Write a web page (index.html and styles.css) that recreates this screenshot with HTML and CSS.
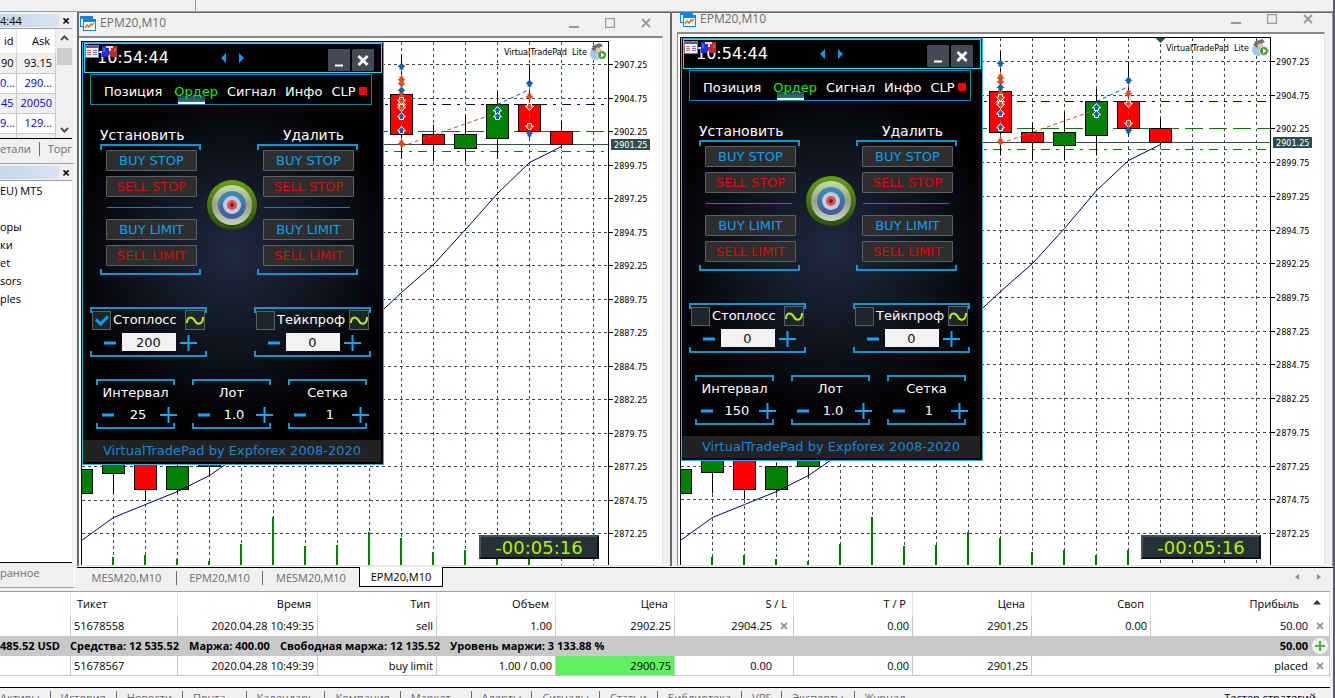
FILE: index.html
```html
<!DOCTYPE html>
<html lang="ru">

<head>
    <meta charset="UTF-8">
    <meta name="viewport" content="width=device-width, initial-scale=1.0">
    <title>EPM20,M10</title>
    <link rel="stylesheet" href="styles.css">
</head>

<body>
    <div class="toolbar"><span class="toolbar-split"></span></div>

    <div class="workspace">
        <aside class="dock">
            <section class="panel market">
                <div class="caption"><span>4:44</span><button type="button" aria-label="Close">×</button></div>
                <div class="market-body">
                    <table class="quotes">
                        <tr><th>id</th><th>Ask</th></tr>
                        <tr class="flat"><td>90</td><td>93.15</td></tr>
                        <tr><td>0...</td><td>290...</td></tr>
                        <tr class="odd"><td>45</td><td>20050</td></tr>
                        <tr><td>9...</td><td>129...</td></tr>
                        <tr class="odd"><td></td><td></td></tr>
                    </table>
                    <div class="scroll">
                        <svg width="9" height="6"><path d="M1 5l3.500-3.500L8 5" /></svg>
                        <span class="thumb"></span>
                        <svg width="9" height="6"><path d="M1 1l3.500 3.500L8 1" /></svg>
                    </div>
                </div>
                <div class="dock-tabs"><span>етали</span><span>Торг</span></div>
            </section>
            <section class="panel navigator">
                <div class="caption"><span></span><button type="button" aria-label="Close">×</button></div>
                <ul class="tree">
                    <li>EU) MT5</li>
                    <li></li>
                    <li>оры</li>
                    <li>ки</li>
                    <li>et</li>
                    <li>sors</li>
                    <li>ples</li>
                </ul>
                <div class="dock-tabs"><span>ранное</span></div>
            </section>
        </aside>

        <main class="mdi">
            <div class="windows">
                <section class="window" id="win1"></section>
                <section class="window second" id="win2"></section>
            </div>
            <nav class="chart-tabs">
                <a href="#win1">MESM20,M10</a>
                <a href="#win1">EPM20,M10</a>
                <a href="#win2">MESM20,M10</a>
                <a href="#win2" class="active">EPM20,M10</a>
                <span class="tab-scroll">
                    <svg width="26" height="8"><path d="M4 1v6L0 4zM22 1v6l4-3z" fill="#8c8c8c" /></svg>
                </span>
            </nav>
        </main>
    </div>

    <section class="terminal">
        <table class="trades">
            <colgroup>
                <col class="c-first"><col class="c-ticket"><col class="c-time">
                <col class="c-num"><col class="c-num"><col class="c-num"><col class="c-num">
                <col class="c-num"><col class="c-num"><col class="c-num"><col>
            </colgroup>
            <thead>
                <tr>
                    <th></th><th class="left">Тикет</th><th>Время</th><th>Тип</th><th>Объем</th><th>Цена</th>
                    <th>S / L</th><th>T / P</th><th>Цена</th><th>Своп</th>
                    <th class="sorted">Прибыль<svg width="8" height="5"><path d="M4 0l4 4.500H0z" fill="#333" /></svg></th>
                </tr>
            </thead>
            <tbody>
                <tr>
                    <td></td><td class="left">51678558</td><td>2020.04.28 10:49:35</td><td>sell</td><td>1.00</td>
                    <td>2902.25</td><td class="closable">2904.25<button type="button" aria-label="Remove S/L"><svg width="8" height="8"><path d="M1 1l6 6M7 1l-6 6" /></svg></button></td>
                    <td>0.00</td><td>2901.25</td><td>0.00</td>
                    <td class="closable">50.00<button type="button" aria-label="Close position"><svg width="8" height="8"><path d="M1 1l6 6M7 1l-6 6" /></svg></button></td>
                </tr>
                <tr class="summary">
                    <td colspan="9" class="left"><span>485.52 USD</span><span>Средства: 12 535.52</span><span>Маржа: 400.00</span><span>Свободная маржа: 12 135.52</span><span>Уровень маржи: 3 133.88 %</span></td>
                    <td></td>
                    <td class="closable">50.00<button type="button" aria-label="New order"><svg width="16" height="16"><circle cx="8" cy="8" r="8" fill="#f2f2f2" /><path d="M8 3v10M3 8h10" class="plus-mark" /></svg></button></td>
                </tr>
                <tr class="last">
                    <td></td><td class="left">51678567</td><td>2020.04.28 10:49:39</td><td>buy limit</td><td>1.00 / 0.00</td>
                    <td class="hit">2900.75</td><td class="closable">0.00</td><td>0.00</td><td>2901.25</td>
                    <td colspan="2" class="closable">placed<button type="button" aria-label="Delete order"><svg width="8" height="8"><path d="M1 1l6 6M7 1l-6 6" /></svg></button></td>
                </tr>
            </tbody>
        </table>
        <nav class="terminal-tabs">
            <a href="#">Активы</a>
            <a href="#">История</a>
            <a href="#">Новости</a>
            <a href="#" class="counted">Почта</a>
            <a href="#">Календарь</a>
            <a href="#">Компания</a>
            <a href="#" class="counted">Маркет</a>
            <a href="#">Алерты</a>
            <a href="#">Сигналы</a>
            <a href="#">Статьи</a>
            <a href="#">Библиотека</a>
            <a href="#">VPS</a>
            <a href="#">Эксперты</a>
            <a href="#">Журнал</a>
            <a href="#" class="tester">Тестер стратегий</a>
        </nav>
    </section>

    <script src="script.js"></script>
</body>

</html>
```

FILE: styles.css
```css
* {
    box-sizing: border-box;
}

body {
    margin: 0;
    height: 100vh;
    display: flex;
    flex-direction: column;
    overflow: hidden;
    background: #f0f0f0;
    border-right: 2px solid #4d5f70;
    font-family: "Open Sans", "Noto Sans", sans-serif;
    font-size: 11px;
    line-height: 14px;
    color: #000;
}

button {
    margin: 0;
    padding: 0;
    border: none;
    background: none;
    font: inherit;
    color: inherit;
    cursor: pointer;
}

a {
    color: inherit;
    text-decoration: none;
}

svg {
    display: block;
}

/* top strip */
.toolbar {
    flex: none;
    height: 12px;
    display: flex;
    border-bottom: 1px solid #9a9a9a;
}

.toolbar-split {
    width: 196px;
    border-right: 1px solid #9a9a9a;
}

.workspace {
    flex: 1;
    min-height: 0;
    display: flex;
}

/* left dock */
.dock {
    flex: none;
    width: 77px;
    display: flex;
    flex-direction: column;
    padding-bottom: 3px;
}

.panel {
    display: flex;
    flex-direction: column;
    border-right: 1px solid #fff;
    border-bottom: 1px solid #a0a0a0;
    margin-right: 2px;
    padding-right: 2px;
}

.market {
    height: 152px;
}

.navigator {
    flex: 1;
    min-height: 0;
}

.caption {
    flex: none;
    height: 17px;
    display: flex;
    align-items: center;
    justify-content: space-between;
    border-bottom: 1px solid #a0a0a0;
}

.caption span {
    width: 59px;
    height: 13px;
    line-height: 13px;
    background: linear-gradient(90deg, #c5d7e8, #d7e4f2);
}

.caption button {
    width: 12px;
    font-size: 14px;
    font-weight: bold;
    line-height: 13px;
}

.market-body {
    flex: 1;
    min-height: 0;
    display: flex;
    overflow: hidden;
    border-bottom: 1px solid #000;
    background: #fff;
}

.quotes {
    width: 56px;
    border-collapse: collapse;
    table-layout: fixed;
    align-self: flex-start;
}

.quotes th,
.quotes td {
    height: 20px;
    padding: 0 3px 0 0;
    border-right: 1px solid #c8c8c8;
    border-bottom: 1px solid #c8c8c8;
    text-align: right;
    font-weight: normal;
    white-space: nowrap;
    color: #0000f0;
}

.quotes th {
    height: 24px;
    padding-right: 5px;
    border-color: #e5e5e5;
    color: #000;
}

.quotes th:first-child,
.quotes td:first-child {
    width: 16px;
    padding-right: 2px;
}

.quotes .flat td {
    color: #000;
}

.quotes .flat,
.quotes .odd {
    background: #f0f0f0;
}

.scroll {
    flex: 1;
    display: flex;
    flex-direction: column;
    align-items: center;
    padding: 6px 0 5px;
    background: #f0f0f0;
}

.scroll path {
    fill: none;
    stroke: #505050;
    stroke-width: 2;
}

.thumb {
    width: 15px;
    height: 17px;
    margin: 7px 0 auto;
    background: #cdcdcd;
}

.dock-tabs {
    flex: none;
    height: 24px;
    padding-bottom: 4px;
    display: flex;
    align-items: center;
    overflow: hidden;
    color: #6d6d6d;
}

.dock-tabs span + span {
    margin-left: 8px;
    padding-left: 8px;
    border-left: 1px solid #6d6d6d;
}

.tree {
    flex: 1;
    margin: 0;
    padding: 1px 0 0;
    list-style: none;
    background: #fff;
    border-bottom: 1px solid #000;
}

.tree li {
    height: 18px;
    line-height: 18px;
}

/* chart windows */
.mdi {
    flex: 1;
    min-width: 0;
    display: flex;
    flex-direction: column;
}

.windows {
    flex: 1;
    min-height: 0;
    display: flex;
    border-left: 2px solid #6a6a6a;
    border-top: 1px solid #6a6a6a;
}

.window {
    width: 591px;
    flex: none;
    display: flex;
    flex-direction: column;
    padding-right: 7px;
}

.window.second {
    flex: 1;
    width: auto;
    min-width: 0;
    padding: 0 7px 0 5px;
    border-left: 2px solid #6a6a6a;
    border-right: 1px solid #a0a0a0;
}

.titlebar {
    flex: none;
    height: 23px;
    display: flex;
    align-items: center;
    gap: 4px;
    padding: 0 12px 3px 1px;
    font-size: 12px;
    color: #6d6d6d;
}

.second .titlebar {
    height: 19px;
    padding-bottom: 7px;
    padding-left: 3px;
}

.window-buttons {
    margin-left: auto;
    display: flex;
    gap: 26px;
}

.window-buttons path {
    fill: none;
    stroke: #9a9a9a;
    stroke-width: 2;
}

.chart {
    flex: 1;
    min-height: 0;
    display: flex;
    padding: 3px 0 0 2px;
    background: #fff;
    border-top: 2px solid #8a8a8a;
    border-right: 1px solid #e3e3e3;
    border-bottom: 1px solid #e3e3e3;
}

.second .chart {
    border-left: 1px solid #8a8a8a;
}

.plot {
    flex: 1;
    min-width: 0;
    position: relative;
    overflow: hidden;
    border: solid #000;
    border-width: 1px 1px 0;
}

.plot > svg,
.axis {
    width: 100%;
    height: 100%;
}

.axis {
    flex: none;
    width: 53px;
    margin-top: 1px;
}

.axis text,
.expert {
    font-family: "DejaVu Sans Condensed", "DejaVu Sans", sans-serif;
    font-stretch: condensed;
    font-size: 9px;
}

.expert {
    position: absolute;
    top: 1px;
    right: 1px;
    display: flex;
    align-items: center;
    gap: 3px;
    white-space: pre;
}

.timer {
    position: absolute;
    right: 9px;
    bottom: 6px;
    width: 120px;
    height: 24px;
    background: #263238;
    border: 2px solid;
    border-color: #45545b #0a1216 #0a1216 #45545b;
    color: #b4f000;
    font: 18px/21px "DejaVu Sans", sans-serif;
    text-align: center;
}

/* chart tabs */
.chart-tabs {
    flex: none;
    height: 25px;
    display: flex;
    padding: 1px 0 4px;
    background: linear-gradient(#000, #000) 0 1px / 100% 1px no-repeat;
    color: #6d6d6d;
}

.chart-tabs a {
    width: 86px;
    margin: 4px 0 2px;
    text-align: center;
    border-right: 1px solid #6d6d6d;
}

.chart-tabs a:first-child {
    width: 100px;
}

.chart-tabs a:nth-child(3) {
    width: 96px;
    border: none;
}

.chart-tabs .active {
    width: 84px;
    margin: 0;
    padding-top: 3px;
    background: #fff;
    color: #000;
    border: 1px solid #000;
    border-top: none;
}

.tab-scroll {
    margin: 6px 12px 0 auto;
}

/* terminal */
.terminal {
    flex: none;
    height: 107px;
    margin-right: 3px;
    display: flex;
    flex-direction: column;
    overflow: hidden;
    background: #fff;
    border-top: 1px solid #a0a0a0;
}

.trades {
    flex: none;
    width: 100%;
    table-layout: fixed;
    border-collapse: separate;
    border-spacing: 0;
}

.c-first {
    width: 71px;
}

.c-ticket {
    width: 107px;
}

.c-time {
    width: 140px;
}

.c-num {
    width: 119px;
}

.trades th,
.trades td {
    height: 20px;
    padding: 0 3px;
    text-align: right;
    white-space: nowrap;
    border-right: 1px solid #c8c8c8;
}

.trades th {
    height: 24px;
    padding: 0 6px;
    font-weight: normal;
    border-color: #e5e5e5;
}

.trades .left {
    text-align: left;
}

.trades .sorted {
    padding-right: 8px;
}

.trades .sorted svg {
    display: inline-block;
    margin: 0 0 3px 14px;
}

.trades .closable {
    position: relative;
    padding-right: 21px;
}

.closable button {
    position: absolute;
    top: 0;
    right: 0;
    width: 18px;
    height: 100%;
    display: flex;
    align-items: center;
    justify-content: center;
}

.closable path {
    fill: none;
    stroke: #9a9a9a;
    stroke-width: 2;
}

.closable .plus-mark {
    stroke: #4db32e;
}

.trades .summary td {
    padding-left: 0;
    background: #c8c8c8;
    border-color: #c8c8c8;
    font-weight: bold;
}

.summary span {
    margin-right: 10px;
}

.trades .last td {
    border-bottom: 1px solid #c8c8c8;
}

.trades .hit {
    background: #60f060;
}

.terminal-tabs {
    flex: none;
    display: flex;
    margin-top: 11px;
    padding: 3px 0;
    border-top: 1px solid #000;
    background: #f0f0f0;
    color: #6d6d6d;
}

.terminal-tabs a {
    padding: 0 10px;
    border-right: 1px solid #6d6d6d;
}

.terminal-tabs a:first-child {
    padding-left: 0;
}

.terminal-tabs .counted {
    padding-right: 20px;
}

.terminal-tabs a:nth-last-child(2) {
    border: none;
}

.terminal-tabs .tester {
    margin-left: auto;
    padding-right: 14px;
    border: none;
    color: #000;
}

/* trade pad */
.pad {
    position: absolute;
    top: 0;
    left: 0;
    width: 302px;
    border: 1px solid #3aa9e8;
    background: radial-gradient(circle at 50% 50%, #1f2941 0, #10151f 90px, #000 170px) #000;
    color: #fff;
    font: 13px/16px "DejaVu Sans", sans-serif;
}

.pad-head {
    height: 30px;
    margin: 0 1px;
    display: flex;
    align-items: center;
    border: 1px solid #12e8f0;
    background: #000;
}

.pad-icons {
    position: absolute;
    top: 2px;
    left: 2px;
}

.pad-clock {
    width: 136px;
    padding-left: 12px;
    font-size: 16px;
}

.pad-head button {
    width: 22px;
    height: 22px;
    margin: 3px 2px 0 0;
    background: #454855;
    border-radius: 1px;
}

.pad-head .pad-min {
    margin-left: auto;
}

.pad-head .pad-close {
    margin-right: 7px;
}

.pad-nav {
    height: 31px;
    margin: 1px 11px 0 7px;
    padding: 0 4px 0 13px;
    display: flex;
    align-items: center;
    gap: 9px;
    border: 1px solid #0a84b8;
    background: #000;
}

.pad-nav a {
    position: relative;
    z-index: 0;
    line-height: 29px;
    padding-top: 4px;
}

.pad-nav a.on {
    margin-left: 3px;
    color: #00f000;
}

.pad-nav a.on::after {
    content: "";
    position: absolute;
    z-index: -1;
    left: 4px;
    bottom: 2px;
    width: 27px;
    height: 6px;
    background: linear-gradient(#1c4558, #3a708a);
    border-bottom: 2px solid #fff;
}

.pad-led {
    width: 8px;
    height: 8px;
    margin: 3px 0 0 -6px;
    background: #f00;
    border-radius: 1px;
}

.pad-orders {
    display: flex;
    align-items: flex-start;
    margin-top: 22px;
    padding-left: 17px;
}

.pad-orders h3 {
    margin: 0 0 1px;
    padding-left: 12px;
    font-size: 14px;
    line-height: 16px;
    font-weight: normal;
    text-align: center;
    white-space: nowrap;
}

.pad-orders .group:first-child h3 {
    padding-left: 0;
    text-align: left;
}

.group {
    width: 101px;
}

.pad-target {
    margin: 53px 0 0 6px;
    width: 50px;
}

.bracket {
    position: relative;
}

.bracket::before,
.bracket::after {
    content: "";
    position: absolute;
    left: 0;
    right: 0;
    height: 4px;
    border: 2px solid #0a98d0;
    pointer-events: none;
}

.bracket::before {
    top: 0;
    border-bottom: none;
}

.bracket::after {
    bottom: 0;
    border-top: none;
}

.order-list {
    height: 131px;
    padding: 6px 4px 0 6px;
    display: flex;
    flex-direction: column;
    gap: 5px;
}

.order-list button {
    height: 21px;
    border: 1px solid #5d6063;
    border-radius: 1px;
    background: #2e2e2e;
    color: #0aa0f0;
}

.order-list .sell {
    color: #dd0808;
}

.order-list hr {
    width: 86px;
    height: 1px;
    margin: 5px 0 6px 1px;
    border: none;
    background: #0a84b8;
}

.pad-stops {
    display: flex;
    justify-content: space-between;
    margin: 32px 12px 0 7px;
}

.stop {
    width: 117px;
    height: 50px;
    padding: 3px 2px 0;
}

.stop-top {
    height: 20px;
    display: flex;
    align-items: center;
    justify-content: space-between;
}

.stop-top input {
    appearance: none;
    width: 19px;
    height: 19px;
    margin: 0;
    display: grid;
    place-items: center;
    border: 1px solid #5d6063;
    background: #1d262b;
}

.stop-top input:checked::before {
    content: "";
    width: 9px;
    height: 5px;
    margin-bottom: 3px;
    border: solid #0aa0f0;
    border-width: 0 0 3px 3px;
    rotate: -45deg;
}

.stop-top label {
    margin-left: 2px;
    margin-right: auto;
}

.stop-top button {
    width: 20px;
    height: 20px;
    border: 1px solid #5d6063;
    background: #1d262b;
}

.spin {
    display: flex;
    align-items: center;
    justify-content: center;
}

.spin input {
    width: 36px;
    height: 18px;
    padding: 0;
    border: none;
    background: none;
    color: #fff;
    font: inherit;
    text-align: center;
}

.stop .spin {
    gap: 4px;
    margin-top: 3px;
}

.stop .spin input {
    width: 54px;
    background: #f2f2f2;
    color: #111;
}

.pad-lots {
    display: flex;
    gap: 17px;
    margin: 22px 0 0 13px;
}

.lot {
    width: 79px;
    height: 50px;
    padding-top: 6px;
    text-align: center;
}

.lot label {
    display: block;
}

.lot .spin {
    width: 84px;
    margin-top: 4px;
    gap: 4px;
}

.pad-foot {
    height: 22px;
    margin: 11px 2px 2px 0;
    line-height: 22px;
    text-align: center;
    background: #222;
    border-radius: 2px;
    color: #1487d8;
}
```

FILE: script.js
```js
const STEP = 32;

// [index, open/close top, open/close bottom, high, low, direction]
const candles = [
    [0, 2877, 2875.25, 2877, 2875.25, "up"],
    [1, 2878, 2876.75, 2878, 2875.25, "up"],
    [2, 2878, 2875.5, 2878, 2874.75, "down"],
    [3, 2877.25, 2875.5, 2877.5, 2875.25, "up"],
    [4, 2878, 2877.25, 2878, 2876.5, "up"],
    [10, 2905, 2902, 2908, 2900.25, "down"],
    [11, 2902, 2901.25, 2902.75, 2900, "down"],
    [12, 2902, 2901, 2903.5, 2900, "up"],
    [13, 2904.25, 2901.75, 2905.25, 2900.25, "up"],
    [14, 2904.25, 2902.25, 2907.25, 2901.75, "down"],
    [15, 2902.25, 2901.25, 2903, 2901, "down"]
];

const average = [
    2871.75, 2873.45, 2874.4, 2875.4, 2876.55, 2878.2, 2880.2, 2882.3, 2884.5, 2888,
    2890.2, 2892.3, 2894.9, 2897.65, 2899.9, 2901.1
];

const volumes = [0, 8, 10, 6, 4, 21, 48, 19, 20, 33, 27, 13, 15, 10, 15];

// [index, price, side, outlined]
const deals = [
    [10, 2907.1, "buy"], [10, 2906.1, "sell"], [10, 2905.8, "sell"], [10, 2905.3, "buy"],
    [10, 2904.9, "sell"], [10, 2904.25, "buy", 1], [10, 2904.55, "sell", 1], [10, 2904.05, "sell", 1],
    [10, 2903.4, "buy", 1], [10, 2902.35, "buy", 1], [10, 2901.35, "sell"],
    [13, 2903.85, "buy", 1], [13, 2903.35, "buy", 1],
    [14, 2905.85, "buy"], [14, 2904.85, "sell"], [14, 2904.1, "sell", 1], [14, 2902.65, "sell", 1], [14, 2902.1, "buy"]
];

const titleIcon = `<svg width="16" height="16"><path d="M0 1h13v11H0z" fill="#1284dc"/><path d="M1 4h11v7H1z" fill="#e8f4fc"/>
    <path d="M3 4h13v12H3z" fill="#1284dc"/><path d="M4 7h11v8H4z" fill="#fff"/><path d="M5 13l2-3 2 2 2-3 1 1 2-2" fill="none" stroke="#f07030" stroke-width="1.500"/></svg>`;

function drawChart(top, scale, shifted) {
    const y = p => Math.round(top + (2907.25 - p) * scale) + 0.5;
    const x = i => i * STEP - 0.5;
    let s = "";

    for (let i = 1; i < 19; i++) {
        s += `<line x1="${x(i)}" x2="${x(i)}" y1="0" y2="100%" stroke="#2f4f4f" stroke-dasharray="3 3"/>`;
    }
    for (let p = 2907.25; p >= 2872.25; p -= 2.5) {
        s += `<line x1="0" x2="100%" y1="${y(p)}" y2="${y(p)}" stroke="#2f4f4f" stroke-dasharray="3 3"/>`;
    }
    volumes.forEach((v, i) => {
        if (v) s += `<svg x="${x(i) - 1.5}" y="100%" width="2" height="${v}" overflow="visible"><rect y="${-v}" width="2" height="${v}" fill="#008000"/></svg>`;
    });

    const level = (p, color, dash) =>
        `<line x1="0" x2="100%" y1="${y(p)}" y2="${y(p)}" stroke="#fff"/>
        <line x1="0" x2="100%" y1="${y(p)}" y2="${y(p)}" stroke="${color}" stroke-dasharray="${dash}"/>`;
    s += level(2904.25, "#000080", "9 6 3 6");
    s += level(2902.25, "#008000", "18 6");
    s += level(2900.75, "#008000", "9 6 3 6");
    s += level(2901.25, "#2f4f4f", "none");

    for (const [i, a, b, hi, lo, dir] of candles) {
        s += `<line x1="${x(i)}" x2="${x(i)}" y1="${y(hi)}" y2="${y(lo)}" stroke="#000"/>`;
        s += `<rect x="${x(i) - 11}" y="${y(a)}" width="22" height="${y(b) - y(a)}" fill="${dir === "up" ? "#008000" : "#f00"}" stroke="#000"/>`;
    }

    s += `<polyline points="${average.map((p, i) => x(i) + "," + y(p)).join(" ")}" fill="none" stroke="#000080"/>`;

    const link = (i1, p1, i2, p2, color) =>
        `<line x1="${x(i1)}" y1="${y(p1)}" x2="${x(i2)}" y2="${y(p2)}" stroke="${color}" stroke-dasharray="4 3"/>`;
    s += link(10, 2901.15, 13, 2903.7, "#e04820");
    s += link(13, 2904.25, 14, 2905.4, "#0860b0");
    s += link(10, 2907, 10, 2901.2, "#e04820");
    s += link(14, 2905.6, 14, 2902.6, "#e04820");

    for (const [i, p, side, outlined] of deals) {
        const flip = side === "sell" ? -1 : 1;
        s += `<path transform="translate(${x(i)} ${y(p)}) scale(1 ${flip})" d="M0-4L4 0.500H2V3H-2V0.500H-4Z"
            fill="${side === "buy" ? "#0860b0" : "#e04820"}" ${outlined ? 'stroke="#fff"' : ""}/>`;
    }
    if (shifted) {
        s += `<path d="M${x(15) - 5} 0h10l-5 5z" fill="#2f4f4f"/>`;
    }
    return `<svg>${s}</svg>`;
}

function drawAxis(top, scale) {
    let s = "";
    for (let p = 2907.25; p >= 2872.25; p -= 2.5) {
        const y = Math.round(top + (2907.25 - p) * scale);
        s += `<line x1="0" x2="4" y1="${y + 0.5}" y2="${y + 0.5}" stroke="#000"/><text x="5" y="${y + 4}">${p.toFixed(2)}</text>`;
    }
    const now = Math.round(top + 6 * scale);
    s += `<rect x="2" y="${now - 5}" width="39" height="11" fill="#2f4f4f"/><text x="5" y="${now + 4}" fill="#fff">2901.25</text>`;
    return `<svg class="axis">${s}</svg>`;
}

const minus = '<button type="button" aria-label="Minus"><svg width="17" height="18"><path d="M3 10h12" stroke="#0aa8ff" stroke-width="3"/></svg></button>';
const plus = '<button type="button" aria-label="Plus"><svg width="17" height="18"><path d="M0 10h17M8.500 2v16" stroke="#0aa8ff" stroke-width="2"/></svg></button>';

function spin(id, value) {
    return `<div class="spin">${minus}<input type="text" id="${id}" value="${value}">${plus}</div>`;
}

function orderGroup(title) {
    return `<div class="group"><h3>${title}</h3><div class="bracket order-list">
        <button type="button">BUY STOP</button><button type="button" class="sell">SELL STOP</button><hr>
        <button type="button">BUY LIMIT</button><button type="button" class="sell">SELL LIMIT</button></div></div>`;
}

function stopBox(id, title, value, checked) {
    return `<div class="bracket stop"><div class="stop-top"><input type="checkbox" id="${id}-on" ${checked ? "checked" : ""}>
        <label for="${id}-on">${title}</label>
        <button type="button" aria-label="Trailing"><svg width="18" height="18"><path d="M1 12c0-8 6-6 8-2s8 4 8-4" fill="none" stroke="#b4f000" stroke-width="2"/></svg></button></div>
        ${spin(id, value)}</div>`;
}

function lotBox(id, title, value) {
    return `<div class="bracket lot"><label for="${id}">${title}</label>${spin(id, value)}</div>`;
}

function drawPad(n, sl, slOn, tp, interval) {
    return `<div class="pad">
        <div class="pad-head">
            <span class="pad-clock">10:54:44</span>
            <svg width="24" height="10"><path d="M5 0v10L0 5zM18 0v10l5-5z" fill="#0a98ff"/></svg>
            <button type="button" class="pad-min" aria-label="Minimize"><svg width="22" height="22"><path d="M7 16.500h8" stroke="#fff" stroke-width="2"/></svg></button>
            <button type="button" class="pad-close" aria-label="Close"><svg width="22" height="22"><path d="M6.500 7l9 9M15.500 7l-9 9" stroke="#fff" stroke-width="3"/></svg></button>
        </div>
        <svg class="pad-icons" width="33" height="13">
            <rect x="0.500" y="0.500" width="13" height="12" fill="#f6f6ff" stroke="#7878b0"/><path d="M1 2h12" stroke="#5858a8" stroke-width="2"/>
            <path d="M2 5.500h4M2 7.500h4M2 9.500h4" stroke="#f06060"/><path d="M8 5.500h4M8 7.500h4M8 9.500h4" stroke="#6070e8"/>
            <path d="M17 1h8v8l-3 3h-5z" fill="#2430d0"/><path d="M24 1h8v11h-6l-2-4z" fill="#c02828"/><path d="M21 1h7v2h-2v3h-2V3h-3z" fill="#ddd"/><path d="M19 3v4M30 3v4" stroke="#8090ff"/>
        </svg>
        <nav class="pad-nav"><a href="#">Позиция</a><a href="#" class="on">Ордер</a><a href="#">Сигнал</a><a href="#">Инфо</a><a href="#">CLP</a><span class="pad-led"></span></nav>
        <div class="pad-orders">
            ${orderGroup("Установить")}
            <svg class="pad-target" width="50" height="50">
                <defs><linearGradient id="g${n}" x2="0" y2="1"><stop stop-color="#68a010"/><stop offset="1" stop-color="#2c4c10"/></linearGradient>
                <linearGradient id="w${n}" x2="0" y2="1"><stop stop-color="#c8dca8"/><stop offset="0.500" stop-color="#98a088"/><stop offset="1" stop-color="#c8d4b8"/></linearGradient>
                <linearGradient id="b${n}" x2="0" y2="1"><stop stop-color="#3c90b0"/><stop offset="1" stop-color="#4858a0"/></linearGradient></defs>
                <circle cx="25" cy="25" r="25" fill="url(#g${n})"/><circle cx="25" cy="25" r="20" fill="url(#w${n})"/>
                <circle cx="25" cy="25" r="14" fill="url(#b${n})"/><circle cx="25" cy="25" r="9" fill="#c0cce0"/>
                <circle cx="25" cy="25" r="5" fill="#e05050"/><circle cx="25" cy="25" r="2" fill="#801818"/>
            </svg>
            ${orderGroup("Удалить")}
        </div>
        <div class="pad-stops">${stopBox("sl" + n, "Стоплосс", sl, slOn)}${stopBox("tp" + n, "Тейкпроф", tp, false)}</div>
        <div class="pad-lots">${lotBox("step" + n, "Интервал", interval)}${lotBox("lot" + n, "Лот", "1.0")}${lotBox("grid" + n, "Сетка", "1")}</div>
        <div class="pad-foot">VirtualTradePad by Expforex 2008-2020</div>
    </div>`;
}

function drawWindow(id, top, scale, shifted, pad) {
    document.getElementById(id).innerHTML = `
        <header class="titlebar">${titleIcon}<span>EPM20,M10</span>
            <div class="window-buttons">
                <button type="button" aria-label="Minimize"><svg width="10" height="10"><path d="M0 9h10"/></svg></button>
                <button type="button" aria-label="Maximize"><svg width="10" height="10"><path d="M0.500 0.500h9v9h-9z" style="stroke-width:1.500"/></svg></button>
                <button type="button" aria-label="Close"><svg width="10" height="10"><path d="M1 1l8 8M9 1l-8 8"/></svg></button>
            </div>
        </header>
        <div class="chart">
            <div class="plot">
                ${drawChart(top, scale, shifted)}
                <div class="expert"><span>VirtualTradePad  Lite</span><svg width="17" height="17"><circle cx="6" cy="11" r="6" fill="#9cc8ec"/><path d="M1 6q6-7 10 1l-3 3z" fill="#606060"/><path d="M2 3l8-3 3 3-8 4z" fill="#707070"/><circle cx="8" cy="7" r="2.500" fill="#e8c8a0"/><circle cx="12" cy="12" r="4.500" fill="#4c9c38" stroke="#e0f0d8"/><path d="M11 9.500v5l3.500-2.500z" fill="#fff"/></svg></div>
                ${pad}
                <div class="timer">-00:05:16</div>
            </div>
            ${drawAxis(top, scale)}
        </div>`;
}

drawWindow("win1", 22, 13.4, false, drawPad(1, 200, true, 0, 25));
drawWindow("win2", 23, 13.486, true, drawPad(2, 0, false, 0, 150));
```
